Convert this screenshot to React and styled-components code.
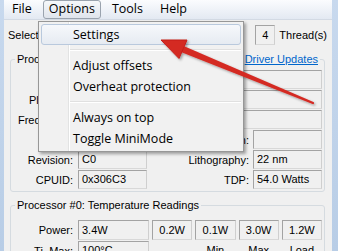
import styled, { createGlobalStyle } from "styled-components";

const GlobalStyle = createGlobalStyle`
  html, body {
    margin: 0;
    padding: 0;
    background: #f0f0f0;
  }
  body {
    font-family: "Liberation Sans", Arial, sans-serif;
    font-size: 11px;
    color: #000;
  }
`;

const Window = styled.div`
  position: relative;
  width: 338px;
  height: 251px;
  overflow: hidden;
  display: flex;
  background: #f0f0f0;
`;

const Frame = styled.div`
  flex: none;
  width: ${({ $w }) => $w}px;
  background: linear-gradient(180deg, #c8d9ee, #b8cde6);
`;

const Inner = styled.div`
  flex: 1;
  display: flex;
  flex-direction: column;
  min-width: 0;
`;

const MenuBar = styled.div`
  height: 21px;
  display: flex;
  align-items: center;
  gap: 5px;
  padding-left: 2px;
  font-family: "Open Sans", "Noto Sans", sans-serif;
  font-size: 12.5px;
  background: linear-gradient(180deg, #fbfcfe, #e3e9f2);
  border-bottom: 1px solid #d3dae4;
`;

const MenuTitle = styled.div`
  height: 17px;
  line-height: 16px;
  padding: 0 5px;
  border: 1px solid ${({ $open }) => ($open ? "#9aa3ae" : "transparent")};
  border-radius: 3px;
  background: ${({ $open }) =>
    $open ? "linear-gradient(180deg, #f6f8fa, #dfe4ec)" : "transparent"};
`;

const TopRow = styled.div`
  height: 20px;
  margin-top: 5px;
  display: flex;
  align-items: center;
  padding: 0 5px 0 4px;
`;

const Spacer = styled.div`
  flex: 1;
`;

const Field = styled.div`
  box-sizing: border-box;
  height: ${({ $h }) => $h || 19}px;
  line-height: ${({ $h }) => ($h || 19) - 2}px;
  width: ${({ $w }) => ($w ? `${$w}px` : "auto")};
  flex: ${({ $w }) => ($w ? "none" : "1")};
  padding: 0 3px;
  text-align: ${({ $center }) => ($center ? "center" : "left")};
  white-space: nowrap;
  overflow: hidden;
  border-style: solid;
  border-width: 1px;
  border-color: #a3a3a3 #cfcfcf #d8d8d8 #a3a3a3;
  background: #f0f0f0;
`;

const ThreadsText = styled.span`
  margin-left: 4px;
`;

const Group = styled.div`
  box-sizing: border-box;
  width: 315px;
  margin: ${({ $mt }) => $mt}px 0 0 6px;
  padding: 0 2px 2px 0;
  border: 1px solid #d5dbe0;
  border-radius: 3px;
`;

const GroupTitle = styled.div`
  display: flex;
  justify-content: space-between;
  height: 17px;
  line-height: 17px;
  margin: -9px 2px 0 4px;
`;

const TitleText = styled.span`
  padding: 0 2px;
  background: #f0f0f0;
`;

const LinkText = styled(TitleText)`
  color: #0066cc;
  text-decoration: underline;
`;

const Rows = styled.div`
  display: flex;
  flex-direction: column;
  gap: ${({ $gap }) => $gap}px;
  padding-top: ${({ $pt }) => $pt}px;
`;

const Row = styled.div`
  display: flex;
  align-items: center;
  height: ${({ $h }) => $h || 19}px;
`;

const Label = styled.div`
  flex: none;
  width: 62px;
  padding-right: 5px;
  text-align: right;
  white-space: nowrap;
`;

const SideLabel = styled.div`
  flex: 1;
  padding-right: 4px;
  text-align: right;
  white-space: nowrap;
`;

const Readings = styled.div`
  flex: 1;
  display: grid;
  grid-template-columns: 71px repeat(4, 1fr);
  column-gap: 3px;
  align-items: center;
`;

const Caption = styled.div`
  text-align: center;
  line-height: 19px;
`;

const Dropdown = styled.div`
  position: absolute;
  left: 38px;
  top: 21px;
  width: 206px;
  box-sizing: border-box;
  padding: 2px;
  border: 1px solid #979797;
  font-family: "Open Sans", "Noto Sans", sans-serif;
  font-size: 12.5px;
  background: linear-gradient(
    90deg,
    #f1f1f1 29px,
    #e2e3e3 29px,
    #e2e3e3 30px,
    #ffffff 30px,
    #ffffff 31px,
    #f1f1f1 31px
  );
  box-shadow: 2px 2px 3px rgba(0, 0, 0, 0.35);
  z-index: 2;
`;

const DropItem = styled.div`
  box-sizing: border-box;
  height: 21px;
  line-height: 19px;
  padding-left: 31px;
  border: 1px solid ${({ $hot }) => ($hot ? "#b9c9dd" : "transparent")};
  border-radius: 3px;
  background: ${({ $hot }) =>
    $hot ? "linear-gradient(180deg, #f6f8fb, #e6ebf2)" : "transparent"};
`;

const Separator = styled.div`
  height: 10px;
  margin-left: 29px;
  background: linear-gradient(
    180deg,
    transparent 4px,
    #e0e0e0 4px,
    #e0e0e0 5px,
    #ffffff 5px,
    #ffffff 6px,
    transparent 6px
  );
`;

const ArrowLayer = styled.svg`
  position: absolute;
  left: 0;
  top: 0;
  pointer-events: none;
  z-index: 3;
`;

const menuItems = [
  ["Settings", true],
  "-",
  ["Adjust offsets"],
  ["Overheat protection"],
  "-",
  ["Always on top"],
  ["Toggle MiniMode"],
];

export default function App() {
  return (
    <>
      <GlobalStyle />
      <Window>
        <Frame $w={4} />
        <Inner>
          <MenuBar>
            <MenuTitle>File</MenuTitle>
            <MenuTitle $open>Options</MenuTitle>
            <MenuTitle>Tools</MenuTitle>
            <MenuTitle>Help</MenuTitle>
          </MenuBar>

          <TopRow>
            <span>Select CPU:</span>
            <Spacer />
            <Field $w={20} $h={20} $center>
              4
            </Field>
            <ThreadsText>Thread(s)</ThreadsText>
          </TopRow>

          <Group $mt={14}>
            <GroupTitle>
              <TitleText>Processor Information</TitleText>
              <LinkText>Driver Updates</LinkText>
            </GroupTitle>
            <Rows $gap={1} $pt={2}>
              <Row>
                <Label>Model:</Label>
                <Field>Intel Core i5 4570</Field>
              </Row>
              <Row>
                <Label>Platform:</Label>
                <Field>LGA 1150</Field>
              </Row>
              <Row>
                <Label>Frequency:</Label>
                <Field>3192.92MHz</Field>
              </Row>
              <Row>
                <Label>VID:</Label>
                <Field $w={69}>1.0318 v</Field>
                <SideLabel>Modulation:</SideLabel>
                <Field $w={69} />
              </Row>
              <Row>
                <Label>Revision:</Label>
                <Field $w={69}>C0</Field>
                <SideLabel>Lithography:</SideLabel>
                <Field $w={69}>22 nm</Field>
              </Row>
              <Row>
                <Label>CPUID:</Label>
                <Field $w={69}>0x306C3</Field>
                <SideLabel>TDP:</SideLabel>
                <Field $w={69}>54.0 Watts</Field>
              </Row>
            </Rows>
          </Group>

          <Group $mt={13}>
            <GroupTitle>
              <TitleText>Processor #0: Temperature Readings</TitleText>
            </GroupTitle>
            <Rows $gap={1} $pt={6}>
              <Row $h={20}>
                <Label>Power:</Label>
                <Readings>
                  <Field $h={20}>3.4W</Field>
                  <Field $h={20} $center>0.2W</Field>
                  <Field $h={20} $center>0.1W</Field>
                  <Field $h={20} $center>3.0W</Field>
                  <Field $h={20} $center>1.2W</Field>
                </Readings>
              </Row>
              <Row>
                <Label>Tj. Max:</Label>
                <Readings>
                  <Field>100°C</Field>
                  <span />
                  <Caption>Min</Caption>
                  <Caption>Max</Caption>
                  <Caption>Load</Caption>
                </Readings>
              </Row>
            </Rows>
          </Group>
        </Inner>
        <Frame $w={6} />

        <Dropdown>
          {menuItems.map((item, i) =>
            item === "-" ? (
              <Separator key={i} />
            ) : (
              <DropItem key={i} $hot={item[1]}>
                {item[0]}
              </DropItem>
            )
          )}
        </Dropdown>

        <ArrowLayer width="338" height="251" viewBox="0 0 338 251">
          <defs>
            <filter id="shade" x="-20%" y="-20%" width="140%" height="140%">
              <feDropShadow dx="1.5" dy="1.5" stdDeviation="1" floodColor="#000" floodOpacity="0.35" />
            </filter>
          </defs>
          <g filter="url(#shade)">
            <path d="M313 103 L180 50.5 L182 46.5 Z" fill="#d42a24" stroke="#d42a24" strokeWidth="2.2" strokeLinejoin="round" />
            <path d="M161 40 L187 40 L179 58.5 Z" fill="#d42a24" stroke="#c41f1a" strokeWidth="1" strokeLinejoin="round" />
          </g>
        </ArrowLayer>
      </Window>
    </>
  );
}
